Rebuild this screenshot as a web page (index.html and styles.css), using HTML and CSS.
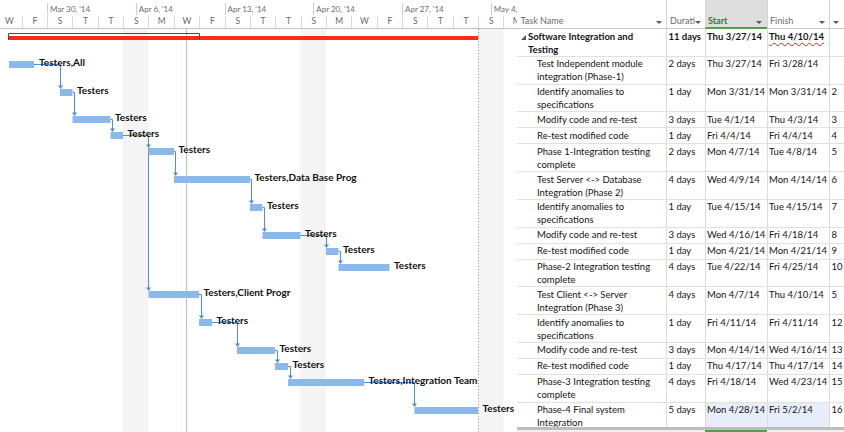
FILE: index.html
```html
<!DOCTYPE html>
<html>
<head>
<meta charset="utf-8">
<title>Gantt</title>
<link rel="stylesheet" href="styles.css">
</head>
<body>
<div class="gantt">
  <div class="timescale">
    <div class="tier tier-top">
      <div class="wk"></div>
      <div class="wk">Mar 30, '14</div>
      <div class="wk">Apr 6, '14</div>
      <div class="wk">Apr 13, '14</div>
      <div class="wk">Apr 20, '14</div>
      <div class="wk">Apr 27, '14</div>
      <div class="wk">May 4, '14</div>
    </div>
    <div class="tier tier-bottom">
      <div class="day">W</div><div class="day">F</div><div class="day">S</div><div class="day">T</div><div class="day">T</div><div class="day">S</div><div class="day">M</div><div class="day">W</div><div class="day">F</div><div class="day">S</div><div class="day">T</div><div class="day">T</div><div class="day">S</div><div class="day">M</div><div class="day">W</div><div class="day">F</div><div class="day">S</div><div class="day">T</div><div class="day">T</div><div class="day">S</div><div class="day">M</div>
    </div>
  </div>
  <svg class="chart" width="517" height="403" viewBox="0 0 517 403">
    <rect class="nw" x="123" y="0" width="25.5" height="403"/>
    <rect class="nw" x="300.5" y="0" width="25.5" height="403"/>
    <rect class="nw" x="478" y="0" width="25.5" height="403"/>
    <line class="status" x1="186.5" y1="0" x2="186.5" y2="403"/>
    <line class="finish" x1="478.5" y1="0" x2="478.5" y2="403"/>
    <rect class="sumbar" x="9" y="7" width="469" height="4"/>
    <path class="bracket" d="M8.5 11V4.5H199.5V11"/>

    <path class="link" d="M34 35.5H60.5V57"/><path class="arr" d="M58 56.5h5l-2.5 3.5z"/>
    <path class="link" d="M72.5 63.5H74.5V84"/><path class="arr" d="M72 83.5h5l-2.5 3.5z"/>
    <path class="link" d="M110.5 90.5H112.5V100"/><path class="arr" d="M110 99.5h5l-2.5 3.5z"/>
    <path class="link" d="M123 106.5H148.5V116"/><path class="arr" d="M146 115.5h5l-2.5 3.5z"/>
    <path class="link" d="M148.5 106.5V259"/><path class="arr" d="M146 258.5h5l-2.5 3.5z"/>
    <path class="link" d="M174 122.5H175.5V144"/><path class="arr" d="M173 143.5h5l-2.5 3.5z"/>
    <path class="link" d="M250 150.5H251.5V172"/><path class="arr" d="M249 171.5h5l-2.5 3.5z"/>
    <path class="link" d="M262.5 178.5H264.5V200"/><path class="arr" d="M262 199.5h5l-2.5 3.5z"/>
    <path class="link" d="M300.5 206.5H326.5V216"/><path class="arr" d="M324 215.5h5l-2.5 3.5z"/>
    <path class="link" d="M338.5 222.5H340.5V232"/><path class="arr" d="M338 231.5h5l-2.5 3.5z"/>
    <path class="link" d="M199 265.5H201.5V287"/><path class="arr" d="M199 286.5h5l-2.5 3.5z"/>
    <path class="link" d="M212 293.5H237.5V315"/><path class="arr" d="M235 314.5h5l-2.5 3.5z"/>
    <path class="link" d="M275 321.5H277.5V331"/><path class="arr" d="M275 330.5h5l-2.5 3.5z"/>
    <path class="link" d="M288 337.5H290.5V347"/><path class="arr" d="M288 346.5h5l-2.5 3.5z"/>
    <path class="link" d="M364 353.5H414.5V375"/><path class="arr" d="M412 374.5h5l-2.5 3.5z"/>

    <rect class="bar" x="9" y="32" width="25" height="7"/>
    <rect class="bar" x="60" y="60" width="12.5" height="7"/>
    <rect class="bar" x="72.5" y="87" width="38" height="7"/>
    <rect class="bar" x="110.5" y="103" width="12.5" height="7"/>
    <rect class="bar" x="148.5" y="119" width="25.5" height="7"/>
    <rect class="bar" x="174" y="147" width="76" height="7"/>
    <rect class="bar" x="250" y="175" width="12.5" height="7"/>
    <rect class="bar" x="262.5" y="203" width="38" height="7"/>
    <rect class="bar" x="326" y="219" width="12.5" height="7"/>
    <rect class="bar" x="338.5" y="235" width="51" height="7"/>
    <rect class="bar" x="148.5" y="262" width="50.5" height="7"/>
    <rect class="bar" x="199" y="290" width="13" height="7"/>
    <rect class="bar" x="237" y="318" width="38" height="7"/>
    <rect class="bar" x="275" y="334" width="13" height="7"/>
    <rect class="bar" x="288" y="350" width="76" height="7"/>
    <rect class="bar" x="414.5" y="378" width="63.5" height="7"/>

    <text class="lbl" x="39" y="36.5">Testers,All</text>
    <text class="lbl" x="77" y="64.5">Testers</text>
    <text class="lbl" x="115" y="91.5">Testers</text>
    <text class="lbl" x="127.5" y="107.5">Testers</text>
    <text class="lbl" x="178.5" y="123.5">Testers</text>
    <text class="lbl" x="254.5" y="151.5">Testers,Data Base Prog</text>
    <text class="lbl" x="267" y="179.5">Testers</text>
    <text class="lbl" x="305" y="207.5">Testers</text>
    <text class="lbl" x="343" y="223.5">Testers</text>
    <text class="lbl" x="394" y="239.5">Testers</text>
    <text class="lbl" x="203.5" y="266.5">Testers,Client Progr</text>
    <text class="lbl" x="216.5" y="294.5">Testers</text>
    <text class="lbl" x="279.5" y="322.5">Testers</text>
    <text class="lbl" x="292.5" y="338.5">Testers</text>
    <text class="lbl" x="368.5" y="354.5">Testers,Integration Team</text>
    <text class="lbl" x="482.5" y="382.5">Testers</text>
  </svg>
</div>

<div class="table">
  <div class="thead">
    <div class="th th-name"><span>Task Name</span><i class="drop"></i></div>
    <div class="th th-dur"><span>Durati</span><i class="drop"></i></div>
    <div class="th th-start sel"><span>Start</span><i class="drop"></i></div>
    <div class="th th-fin"><span>Finish</span><i class="drop"></i></div>
    <div class="th th-pred"><i class="drop"></i></div>
  </div>
  <div class="tbody">
    <div class="row d sum">
      <div class="c name"><svg class="tri" width="5" height="5" viewBox="0 0 5 5"><path d="M5 0V5H0z"/></svg><span>Software Integration and<br>Testing</span></div>
      <div class="c dur">11 days</div><div class="c start">Thu 3/27/14</div><div class="c fin"><span class="chg">Thu 4/10/14</span></div><div class="c pred"></div>
    </div>
    <div class="row d">
      <div class="c name">Test Independent module<br>integration (Phase-1)</div>
      <div class="c dur">2 days</div><div class="c start">Thu 3/27/14</div><div class="c fin">Fri 3/28/14</div><div class="c pred"></div>
    </div>
    <div class="row d">
      <div class="c name">Identify anomalies to<br>specifications</div>
      <div class="c dur">1 day</div><div class="c start">Mon 3/31/14</div><div class="c fin">Mon 3/31/14</div><div class="c pred">2</div>
    </div>
    <div class="row s">
      <div class="c name">Modify code and re-test</div>
      <div class="c dur">3 days</div><div class="c start">Tue 4/1/14</div><div class="c fin">Thu 4/3/14</div><div class="c pred">3</div>
    </div>
    <div class="row s">
      <div class="c name">Re-test modified code</div>
      <div class="c dur">1 day</div><div class="c start">Fri 4/4/14</div><div class="c fin">Fri 4/4/14</div><div class="c pred">4</div>
    </div>
    <div class="row d">
      <div class="c name">Phase 1-Integration testing<br>complete</div>
      <div class="c dur">2 days</div><div class="c start">Mon 4/7/14</div><div class="c fin">Tue 4/8/14</div><div class="c pred">5</div>
    </div>
    <div class="row d">
      <div class="c name">Test Server &lt;-&gt; Database<br>Integration (Phase 2)</div>
      <div class="c dur">4 days</div><div class="c start">Wed 4/9/14</div><div class="c fin">Mon 4/14/14</div><div class="c pred">6</div>
    </div>
    <div class="row d">
      <div class="c name">Identify anomalies to<br>specifications</div>
      <div class="c dur">1 day</div><div class="c start">Tue 4/15/14</div><div class="c fin">Tue 4/15/14</div><div class="c pred">7</div>
    </div>
    <div class="row s">
      <div class="c name">Modify code and re-test</div>
      <div class="c dur">3 days</div><div class="c start">Wed 4/16/14</div><div class="c fin">Fri 4/18/14</div><div class="c pred">8</div>
    </div>
    <div class="row s">
      <div class="c name">Re-test modified code</div>
      <div class="c dur">1 day</div><div class="c start">Mon 4/21/14</div><div class="c fin">Mon 4/21/14</div><div class="c pred">9</div>
    </div>
    <div class="row d">
      <div class="c name">Phase-2 Integration testing<br>complete</div>
      <div class="c dur">4 days</div><div class="c start">Tue 4/22/14</div><div class="c fin">Fri 4/25/14</div><div class="c pred">10</div>
    </div>
    <div class="row d">
      <div class="c name">Test Client &lt;-&gt; Server<br>Integration (Phase 3)</div>
      <div class="c dur">4 days</div><div class="c start">Mon 4/7/14</div><div class="c fin">Thu 4/10/14</div><div class="c pred">5</div>
    </div>
    <div class="row d">
      <div class="c name">Identify anomalies to<br>specifications</div>
      <div class="c dur">1 day</div><div class="c start">Fri 4/11/14</div><div class="c fin">Fri 4/11/14</div><div class="c pred">12</div>
    </div>
    <div class="row s">
      <div class="c name">Modify code and re-test</div>
      <div class="c dur">3 days</div><div class="c start">Mon 4/14/14</div><div class="c fin">Wed 4/16/14</div><div class="c pred">13</div>
    </div>
    <div class="row s">
      <div class="c name">Re-test modified code</div>
      <div class="c dur">1 day</div><div class="c start">Thu 4/17/14</div><div class="c fin">Thu 4/17/14</div><div class="c pred">14</div>
    </div>
    <div class="row d">
      <div class="c name">Phase-3 Integration testing<br>complete</div>
      <div class="c dur">4 days</div><div class="c start">Fri 4/18/14</div><div class="c fin">Wed 4/23/14</div><div class="c pred">15</div>
    </div>
    <div class="row d last">
      <div class="c name">Phase-4 Final system<br>Integration</div>
      <div class="c dur">5 days</div><div class="c start">Mon 4/28/14</div><div class="c fin">Fri 5/2/14</div><div class="c pred">16</div>
    </div>
  </div>
  <div class="tfoot"><div class="tfoot-sel"></div></div>
</div>
</body>
</html>
```
FILE: styles.css
```css
* { box-sizing: border-box; }
html, body { margin: 0; padding: 0; }
body {
  width: 844px;
  height: 432px;
  overflow: hidden;
  display: flex;
  background: #fff;
  font-family: Lato, "Liberation Sans", sans-serif;
  color: #141414;
}

/* ---------- Gantt pane ---------- */
.gantt {
  width: 517px;
  flex: none;
  overflow: hidden;
  display: flex;
  flex-direction: column;
}
.timescale {
  height: 29px;
  flex: none;
  border-bottom: 1px solid #c2c2c2;
}
.tier { display: flex; white-space: nowrap; }
.tier-top { height: 15px; padding-top: 3px; margin-left: -41.76px; }
.wk {
  flex: none;
  width: 88.76px;
  border-left: 1px solid #cfcfcf;
  padding-left: 2px;
  font-size: 8px;
  line-height: 12px;
  color: #6e6e6e;
}
.tier-bottom { height: 13px; padding-top: 1px; margin-left: -3.72px; }
.day {
  flex: none;
  width: 25.36px;
  border-left: 1px solid #dadada;
  text-align: center;
  font-size: 8.5px;
  line-height: 10px;
  color: #6a6a6a;
}
.chart { display: block; flex: none; }
.nw { fill: #f4f4f4; }
.status { stroke: #a3d69c; stroke-width: 1; }
.finish { stroke: #a0a0a0; stroke-width: 1; stroke-dasharray: 1 2; }
.sumbar { fill: #ff2a1a; }
.bracket { fill: none; stroke: #4a4a4a; stroke-width: 1; }
.link { fill: none; stroke: #4d8fd9; stroke-width: 1; }
.arr { fill: #4d8fd9; }
.bar { fill: #8bb9e9; }
.lbl { font-family: Lato, "Liberation Sans", sans-serif; font-weight: 700; font-size: 10px; fill: #111; }

/* ---------- Table pane ---------- */
.table {
  flex: 1;
  min-width: 0;
  display: flex;
  flex-direction: column;
  overflow: hidden;
}
.thead, .row {
  display: grid;
  grid-template-columns: 149px 39px 62px 62px 1fr;
}
.thead { height: 29px; flex: none; }
.th {
  display: flex;
  align-items: flex-end;
  padding: 0 4px 1px 3px;
  border-left: 1px solid #d4d4d4;
  border-bottom: 1px solid #c8c8c8;
  font-size: 9px;
  line-height: 12px;
  color: #6b6b6b;
  white-space: nowrap;
  overflow: hidden;
}
.th-name { border-left: 0; padding-left: 3.5px; }
.th-dur { padding-left: 3px; padding-right: 8px; }
.th-start { padding-left: 2px; padding-right: 5px; }
.th-fin { padding-left: 2px; padding-right: 4.5px; }
.th-pred { padding-left: 2.5px; }
.th.sel {
  background: #dedede;
  color: #2f7d32;
  font-weight: 700;
  border-bottom: 2px solid #4ea24e;
  padding-bottom: 0;
}
.drop {
  flex: none;
  margin-left: auto;
  margin-bottom: 3.5px;
  width: 0;
  height: 0;
  border-left: 3px solid transparent;
  border-right: 3px solid transparent;
  border-top: 3px solid #5a5a5a;
}
.th-pred .drop { margin-left: 0; }

.tbody { flex: 1; overflow: hidden; }
.row { border-bottom: 1px solid #e1e1e1; }
.row.d { height: 27.75px; }
.row.s { height: 16px; }
.c {
  font-size: 9.5px;
  line-height: 13px;
  padding-top: 0.5px;
  white-space: nowrap;
  overflow: hidden;
  border-left: 1px solid #dcdcdc;
}
.c.name { border-left: 0; padding-left: 20px; }
.c.dur { padding-left: 1.5px; }
.c.start { padding-left: 1px; }
.c.fin { padding-left: 1px; }
.c.pred { padding-left: 1.5px; }
.row.sum .c { font-weight: 700; }
.row.sum .name { padding-left: 4px; display: flex; align-items: flex-start; gap: 2px; }
.tri { flex: none; margin-top: 5px; fill: #555; }
.chg {
  text-decoration: underline wavy #e02020;
  text-decoration-thickness: 1px;
  text-underline-offset: 2px;
}
.row.last .start, .row.last .fin { background: #e7eef9; }

.tfoot {
  height: 5px;
  flex: none;
  border-top: 3px solid #bdbdbd;
  background: #efefef;
}
.tfoot-sel { margin-left: 188px; width: 62px; height: 2px; background: #4ea24e; }
```
